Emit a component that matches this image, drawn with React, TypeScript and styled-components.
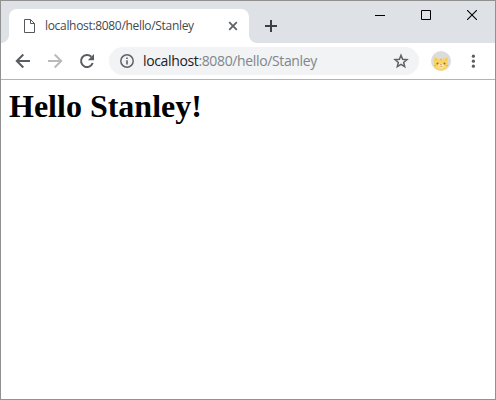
import React from "react";
import styled, { createGlobalStyle } from "styled-components";

const GlobalStyle = createGlobalStyle`
  * { box-sizing: border-box; }
  body { margin: 0; background: #fff; }
  svg { display: block; flex: none; }
`;

const Window = styled.div`
  width: 496px;
  height: 400px;
  border: 1px solid #919191;
  background: #fff;
  display: flex;
  flex-direction: column;
  overflow: hidden;
  font-family: "Open Sans", "Noto Sans", sans-serif;
`;

const TabStrip = styled.header`
  height: 42px;
  flex: none;
  padding-top: 8px;
  background: #dee1e6;
  display: flex;
`;

const TabFoot = styled.span<{ $side: "left" | "right" }>`
  width: 8px;
  height: 8px;
  align-self: flex-end;
  background: radial-gradient(
    circle at ${(p) => (p.$side === "left" ? "0 0" : "100% 0")},
    transparent 7.5px,
    #fff 8.3px
  );
`;

const Tab = styled.div`
  width: 240px;
  height: 34px;
  padding: 0 11px 0 15px;
  border-radius: 8px 8px 0 0;
  background: #fff;
  display: flex;
  align-items: center;
`;

const TabTitle = styled.span`
  flex: 1;
  margin-left: 10px;
  color: #45494d;
  font-size: 12px;
  line-height: 16px;
  letter-spacing: -0.32px;
  white-space: nowrap;
`;

const NewTab = styled.button`
  width: 28px;
  height: 34px;
  padding: 0;
  border: 0;
  background: none;
  display: grid;
  place-items: center;
`;

const WindowControls = styled.div`
  margin: -8px 0 0 auto;
  height: 28px;
  display: flex;
`;

const WindowButton = styled.button`
  width: 46px;
  height: 28px;
  padding: 0;
  border: 0;
  background: none;
  display: grid;
  place-items: center;
`;

const Toolbar = styled.nav`
  height: 37px;
  flex: none;
  padding-left: 6px;
  border-bottom: 1px solid #b3b3b3;
  display: flex;
  align-items: center;
`;

const ToolButton = styled.button<{ $muted?: boolean }>`
  width: 32px;
  height: 28px;
  padding: 0;
  border: 0;
  background: none;
  color: ${(p) => (p.$muted ? "#bababa" : "#5a5d61")};
  display: grid;
  place-items: center;
`;

const AddressBar = styled.div`
  width: 310px;
  height: 28px;
  margin-left: 6px;
  padding: 0 10px;
  border-radius: 14px;
  background: #f1f3f4;
  color: #5f6368;
  display: flex;
  align-items: center;
`;

const Url = styled.span`
  flex: 1;
  margin-left: 8px;
  color: #80868b;
  font-size: 14px;
  line-height: 20px;
  letter-spacing: -0.36px;
  white-space: nowrap;
`;

const Host = styled.span`
  color: #202124;
`;

const Avatar = styled.div`
  width: 20px;
  height: 20px;
  margin-left: 12px;
`;

const MenuButton = styled(ToolButton)`
  width: 20px;
  margin-left: 12px;
`;

const Page = styled.main`
  flex: 1;
  padding: 8px;
`;

const Heading = styled.h1`
  margin: 0;
  color: #000;
  font: bold 32px/37px "Liberation Serif", serif;
`;

const FileIcon = () => (
  <svg width="11" height="14" viewBox="0 0 11 14" fill="none" stroke="#55585c">
    <path d="M.5.5h6l4 4v9H.5zM6.5.5v4h4" />
  </svg>
);

const CloseIcon = () => (
  <svg width="10" height="10" viewBox="0 0 10 10" stroke="#5f6368" strokeWidth="1.8">
    <path d="M1.2 1.2l7.6 7.6M8.8 1.2L1.2 8.8" />
  </svg>
);

const BackIcon = () => (
  <svg width="16" height="16" viewBox="0 0 16 16" fill="none" stroke="currentColor" strokeWidth="2">
    <path d="M15 8H2M8.3 1.5L1.8 8l6.5 6.5" />
  </svg>
);

const ForwardIcon = () => (
  <svg width="16" height="16" viewBox="0 0 16 16" fill="none" stroke="currentColor" strokeWidth="2">
    <path d="M1 8h13M7.7 1.5L14.2 8l-6.5 6.5" />
  </svg>
);

const ReloadIcon = () => (
  <svg width="16" height="16" viewBox="0 0 16 16" fill="none">
    <path d="M13.7 10A6 6 0 1 1 12.3 3.8" stroke="currentColor" strokeWidth="2" />
    <path d="M15 1v6.2H8.8z" fill="currentColor" />
  </svg>
);

const InfoIcon = () => (
  <svg width="16" height="16" viewBox="0 0 16 16" fill="none">
    <circle cx="8" cy="8" r="6.2" stroke="#5f6368" strokeWidth="1.5" />
    <path d="M7.2 4.5h1.6v1.6H7.2zM7.2 7.2h1.6v4.3H7.2z" fill="#5f6368" />
  </svg>
);

const StarIcon = () => (
  <svg width="16" height="16" viewBox="0 0 16 16" fill="none" stroke="#5f6368" strokeWidth="1.5">
    <path d="M8 2.3l1.6 4 4.4.35-3.35 2.85 1.05 4.2L8 11.4l-3.7 2.3 1.05-4.2L2 6.65l4.4-.35z" />
  </svg>
);

const CatIcon = () => (
  <svg width="20" height="20" viewBox="0 0 20 20">
    <circle cx="10" cy="10" r="10" fill="#dcdcdc" />
    <path d="M3.4 5.4L6.8 7.8h6.4l3.4-2.4.6 8.1c-.4 3.600-3 6-7.200 6s-6.800-2.400-7.200-6z" fill="#fbd464" />
    <path d="M4.200 7l1.800 1.300-1.500 1.700zM15.800 7L14 8.300l1.500 1.700z" fill="#f4bd49" />
    <path d="M9 7.800h2l-1 2.500z" fill="#f1b63e" />
    <ellipse cx="10" cy="15" rx="3" ry="2.300" fill="#ffe8b4" />
    <circle cx="6.500" cy="12.500" r="1" fill="#89683c" />
    <circle cx="13.500" cy="12.500" r="1" fill="#89683c" />
    <path d="M9 13.300h2l-1 1.200z" fill="#b87550" />
    <path d="M8.300 15.500q.9.700 1.700-.5.800 1.200 1.700.5" fill="none" stroke="#d39a50" strokeWidth=".7" />
    <path d="M3.200 14.500h2M14.800 14.500h2" stroke="#eda93f" strokeWidth=".8" />
  </svg>
);

export default function App() {
  return (
    <>
      <GlobalStyle />
      <Window>
        <TabStrip>
          <TabFoot $side="left" />
          <Tab>
            <FileIcon />
            <TabTitle>localhost:8080/hello/Stanley</TabTitle>
            <CloseIcon />
          </Tab>
          <TabFoot $side="right" />
          <NewTab aria-label="New tab">
            <svg width="12" height="12" viewBox="0 0 12 12" stroke="#3c4043" strokeWidth="2">
              <path d="M6 0v12M0 6h12" />
            </svg>
          </NewTab>
          <WindowControls>
            <WindowButton aria-label="Minimize">
              <svg width="10" height="10" viewBox="0 0 10 10" stroke="#000">
                <path d="M0 5.5h10" />
              </svg>
            </WindowButton>
            <WindowButton aria-label="Maximize">
              <svg width="10" height="10" viewBox="0 0 10 10" fill="none" stroke="#000">
                <path d="M.5.5h9v9h-9z" />
              </svg>
            </WindowButton>
            <WindowButton aria-label="Close">
              <svg width="10" height="10" viewBox="0 0 10 10" stroke="#000" strokeWidth="1.1">
                <path d="M0 0l10 10M10 0L0 10" />
              </svg>
            </WindowButton>
          </WindowControls>
        </TabStrip>
        <Toolbar>
          <ToolButton aria-label="Back"><BackIcon /></ToolButton>
          <ToolButton $muted aria-label="Forward"><ForwardIcon /></ToolButton>
          <ToolButton aria-label="Reload"><ReloadIcon /></ToolButton>
          <AddressBar>
            <InfoIcon />
            <Url><Host>localhost</Host>:8080/hello/Stanley</Url>
            <StarIcon />
          </AddressBar>
          <Avatar><CatIcon /></Avatar>
          <MenuButton aria-label="Menu">
            <svg width="4" height="14" viewBox="0 0 4 14" fill="#5a5d61">
              <circle cx="2.4" cy="2.2" r="1.6" />
              <circle cx="2.4" cy="7.2" r="1.6" />
              <circle cx="2.4" cy="12.2" r="1.6" />
            </svg>
          </MenuButton>
        </Toolbar>
        <Page>
          <Heading>Hello Stanley!</Heading>
        </Page>
      </Window>
    </>
  );
}
